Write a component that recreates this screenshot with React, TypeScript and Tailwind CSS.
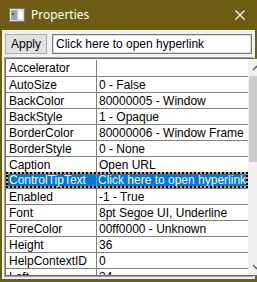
import React from "react";

const rows: [string, string][] = [
  ["Accelerator", ""],
  ["AutoSize", "0 - False"],
  ["BackColor", "80000005 - Window"],
  ["BackStyle", "1 - Opaque"],
  ["BorderColor", "80000006 - Window Frame"],
  ["BorderStyle", "0 - None"],
  ["Caption", "Open URL"],
  ["ControlTipText", "Click here to open hyperlink"],
  ["Enabled", "-1 - True"],
  ["Font", "8pt Segoe UI, Underline"],
  ["ForeColor", "00ff0000 - Unknown"],
  ["Height", "36"],
  ["HelpContextID", "0"],
  ["Left", "24"],
];

const cellFont = { fontFamily: '"Liberation Sans Narrow", "Liberation Sans", Arial, sans-serif' };

export default function App() {
  return (
    <div className="w-[257px] h-[282px] bg-[#6d5d13] flex flex-col overflow-hidden">
      <div className="h-[30px] flex items-center shrink-0">
        <svg width="16" height="14" viewBox="0 0 16 14" className="ml-[9px]">
          <rect x="0.5" y="0.5" width="15" height="13" fill="#e8e8e8" stroke="#7a7a7a" />
          <rect x="2" y="2" width="6" height="10" fill="#9aa4b4" />
          <rect x="3" y="5" width="2" height="2" fill="#2a5ad0" />
          <rect x="9" y="2" width="5" height="10" fill="#ffffff" stroke="#b0b0b0" strokeWidth="0.5" />
        </svg>
        <span className="ml-[6px] text-white text-[12px] leading-none" style={{ fontFamily: '"Noto Sans", sans-serif' }}>
          Properties
        </span>
        <svg width="10" height="10" viewBox="0 0 10 10" className="ml-auto mr-[12px]">
          <path d="M0.5 0.5 L9.5 9.5 M9.5 0.5 L0.5 9.5" stroke="#ffffff" strokeWidth="1.2" />
        </svg>
      </div>
      <div className="flex-1 mx-[2px] mb-[3px] bg-[#f0f0f0] flex flex-col min-h-0">
        <div className="flex items-center gap-[5px] pl-[3px] pr-[3px] pt-[4px] pb-[3px]">
          <div
            className="w-[42px] h-[20px] bg-[#e1e1e1] border border-[#adadad] flex items-center justify-center text-[12px] text-black"
            style={cellFont}
          >
            Apply
          </div>
          <div className="flex-1 h-[20px] border border-[#7a7a7a] bg-white p-0">
            <div className="h-full border border-[#dcdcdc] flex items-center pl-[2px] text-[12px] text-black" style={{ fontFamily: '"Liberation Sans", Arial, sans-serif' }}>
              Click here to open hyperlink
            </div>
          </div>
        </div>
        <div className="mx-[2px] flex-1 border border-[#a0a0a0] flex min-h-0 mb-[2px]">
          <div className="flex-1 border border-[#696969] bg-white flex min-h-0">
            <div className="flex-1 flex flex-col overflow-hidden">
              {rows.map(([k, v], i) => {
                const sel = k === "ControlTipText";
                if (sel) {
                  return (
                    <div key={k} className="h-[16px] shrink-0 bg-[#e89a3c] border-2 border-dotted border-black flex">
                      <div className="flex-1 bg-[#0078d7] flex text-white text-[12px] leading-none" style={cellFont}>
                        <div className="w-[89px] border-r border-[#8a8a8a] flex items-center pl-[1px]">{k}</div>
                        <div className="flex-1 flex items-center pl-[1px] whitespace-nowrap overflow-hidden">{v}</div>
                      </div>
                    </div>
                  );
                }
                return (
                  <div
                    key={k}
                    className={`shrink-0 flex text-black text-[12px] leading-none ${i === 0 ? "h-[17px] pt-[1px]" : "h-[16px] border-t border-[#808080]"}`}
                    style={cellFont}
                  >
                    <div className="w-[91px] border-r border-[#808080] flex items-center pl-[3px]">{k}</div>
                    <div className="flex-1 flex items-center pl-[2px] whitespace-nowrap overflow-hidden">{v}</div>
                  </div>
                );
              })}
            </div>
            <div className="w-[16px] bg-[#f0f0f0] flex flex-col shrink-0">
              <div className="h-[17px] flex items-center justify-center shrink-0">
                <svg width="9" height="6" viewBox="0 0 9 6">
                  <path d="M1 5 L4.5 1.5 L8 5" stroke="#606060" strokeWidth="1.5" fill="none" />
                </svg>
              </div>
              <div className="h-[86px] mx-[1px] bg-[#cdcdcd] shrink-0" />
              <div className="flex-1" />
              <div className="h-[17px] flex items-center justify-center shrink-0">
                <svg width="9" height="6" viewBox="0 0 9 6">
                  <path d="M1 1 L4.5 4.5 L8 1" stroke="#606060" strokeWidth="1.5" fill="none" />
                </svg>
              </div>
            </div>
          </div>
        </div>
      </div>
    </div>
  );
}
